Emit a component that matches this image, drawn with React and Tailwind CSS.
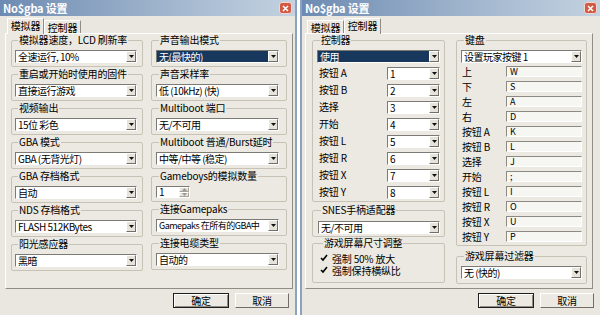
import React from "react";
import clsx from "clsx";

// small down arrow used on combo buttons
const Arrow = () => (
  <span className="flex w-[10px] h-full shrink-0 items-center justify-center bg-[#e6e3da] border border-t-white border-l-white border-r-[#716f68] border-b-[#716f68]">
    <svg width="5" height="3" viewBox="0 0 5 3">
      <path d="M0 0h5L2.5 3z" fill="#111" />
    </svg>
  </span>
);

const Combo = ({ text, selected, className = "", textClass = "text-[10px] tracking-[-0.5px]" }) => (
  <div
    className={clsx(
      "flex h-[13px] border border-t-[#7b7a74] border-l-[#7b7a74] border-r-white border-b-white bg-white",
      className
    )}
  >
    <div
      className={clsx(
        "flex-1 min-w-0 flex items-center px-[2px] leading-[11px] whitespace-nowrap",
        textClass,
        selected && "bg-[#17375c] text-white"
      )}
    >
      {text}
    </div>
    <Arrow />
  </div>
);

const TextBox = ({ text }) => (
  <div className="flex items-center w-[76px] h-[11px] px-[3px] bg-[#f6f6f3] border border-t-[#8c8a83] border-l-[#8c8a83] border-r-white border-b-white text-[9px] leading-[9px]">
    {text}
  </div>
);

const SpinBox = () => (
  <div className="flex h-[12px] w-[34px] border border-t-[#7b7a74] border-l-[#7b7a74] border-r-white border-b-white bg-white">
    <div className="flex-1 flex items-center px-[2px] text-[10px] leading-[10px]">1</div>
    <div className="flex flex-col w-[10px]">
      <span className="flex-1 flex items-center justify-center bg-[#e6e3da] border border-t-white border-l-white border-r-[#a5a39b] border-b-[#a5a39b]">
        <svg width="5" height="3" viewBox="0 0 5 3">
          <path d="M0 3h5L2.5 0z" fill="#9a9890" />
        </svg>
      </span>
      <span className="flex-1 flex items-center justify-center bg-[#e6e3da] border border-t-white border-l-white border-r-[#a5a39b] border-b-[#a5a39b]">
        <svg width="5" height="3" viewBox="0 0 5 3">
          <path d="M0 0h5L2.5 3z" fill="#9a9890" />
        </svg>
      </span>
    </div>
  </div>
);

const Group = ({ label, className = "", children }) => (
  <fieldset className={clsx("min-w-0 border border-[#c6c3b6] rounded-[2px]", className)}>
    <legend className="ml-[3px] px-[1px] text-[10px] leading-[12px]">{label}</legend>
    {children}
  </fieldset>
);

const Check = ({ label }) => (
  <div className="flex items-center h-[12px] gap-[4px] text-[10px] leading-[11px]">
    <span className="flex w-[8px] h-[8px] items-center justify-center">
      <svg width="8" height="8" viewBox="0 0 8 8">
        <path d="M1 4l2 2 4-5" stroke="#000" strokeWidth="1.6" fill="none" />
      </svg>
    </span>
    {label}
  </div>
);

const CloseBtn = () => (
  <div className="flex w-[13px] h-[12px] items-center justify-center rounded-[3px] bg-[#d25a45] border border-[#f2d6cf]">
    <svg width="7" height="7" viewBox="0 0 7 7">
      <path d="M1 1l5 5M6 1L1 6" stroke="#fff" strokeWidth="1.5" />
    </svg>
  </div>
);

const Tabs = ({ active }) => (
  <div className="flex items-end h-[16px] pl-[2px]">
    {["模拟器", "控制器"].map((t) => (
      <div
        key={t}
        className={clsx(
          "flex items-center justify-center w-[37px] text-[10px] leading-[11px] bg-[#ebe9e1] border border-b-0 border-t-white border-l-white border-r-[#8f8d85]",
          t === active ? "h-[16px] relative z-10 -mb-[1px] pb-[2px]" : "h-[13px]"
        )}
      >
        {t}
      </div>
    ))}
  </div>
);

const Buttons = () => (
  <div className="flex justify-end gap-[6px] pt-[4px] pr-[6px]">
    <div className="flex w-[56px] h-[15px] items-center justify-center text-[10px] leading-[11px] bg-[#ebe9e1] border border-[#1e1e1e] shadow-[inset_1px_1px_0_#fff,inset_-1px_-1px_0_#8f8d85]">
      确定
    </div>
    <div className="flex w-[54px] h-[15px] items-center justify-center text-[10px] leading-[11px] bg-[#ebe9e1] border border-t-white border-l-white border-r-[#6f6d66] border-b-[#6f6d66]">
      取消
    </div>
  </div>
);

const TitleBar = () => (
  <div className="flex items-center justify-between h-[16px] pl-[3px] pr-[3px] bg-gradient-to-r from-[#6d8bb2] via-[#9bb1ca] to-[#c4d2e1]">
    <span className="text-white font-bold text-[11px] leading-[12px]">No$gba 设置</span>
    <CloseBtn />
  </div>
);

const leftCol = [
  ["模拟器速度，LCD 刷新率", "全速运行, 10%"],
  ["重启或开始时使用的固件", "直接运行游戏"],
  ["视频输出", "15位 彩色"],
  ["GBA 模式", "GBA (无背光灯)"],
  ["GBA 存档格式", "自动"],
  ["NDS 存档格式", "FLASH 512KBytes"],
  ["阳光感应器", "黑暗"],
];

const rightCol = [
  ["声音输出模式", "无(最快的)", true],
  ["声音采样率", "低 (10kHz) (快)"],
  ["Multiboot 端口", "无/不可用"],
  ["Multiboot 普通/Burst延时", "中等/中等 (稳定)"],
  ["Gameboys的模拟数量", null],
  ["连接Gamepaks", "Gamepaks 在所有的GBA中"],
  ["连接电缆类型", "自动的"],
];

const pads = [
  ["按钮 A", "1"],
  ["按钮 B", "2"],
  ["选择", "3"],
  ["开始", "4"],
  ["按钮 L", "5"],
  ["按钮 R", "6"],
  ["按钮 X", "7"],
  ["按钮 Y", "8"],
];

const keys = [
  ["上", "W"],
  ["下", "S"],
  ["左", "A"],
  ["右", "D"],
  ["按钮 A", "K"],
  ["按钮 B", "L"],
  ["选择", "J"],
  ["开始", ";"],
  ["按钮 L", "I"],
  ["按钮 R", "O"],
  ["按钮 X", "U"],
  ["按钮 Y", "P"],
];

const EmulatorDialog = () => (
  <div className="flex flex-col w-[297px] h-[315px] bg-[#e9e7df] border-r-2 border-[#8ba3c2]">
    <TitleBar />
    <div className="pl-[5px] pt-[1px]">
      <Tabs active="模拟器" />
      <div className="flex gap-[8px] w-[288px] h-[256px] pl-[5px] bg-[#ebe9e1] border border-t-white border-l-white border-r-[#8f8d85] border-b-[#8f8d85]">
        <div className="flex flex-col gap-[1px] w-[132px]">
          {leftCol.map(([label, value]) => (
            <Group key={label} label={label} className="pl-[3px] pr-[5px] pt-[4px] pb-[3px]">
              <Combo text={value} />
            </Group>
          ))}
        </div>
        <div className="flex flex-col gap-[1px] w-[136px]">
          {rightCol.map(([label, value, sel]) => (
            <Group key={label} label={label} className="pl-[4px] pr-[7px] pt-[4px] pb-[3px]">
              {value ? (
                <Combo
                  text={value}
                  selected={sel}
                  textClass={value.startsWith("Gamepaks") ? "text-[9px] tracking-[-0.5px]" : undefined}
                />
              ) : (
                <SpinBox />
              )}
            </Group>
          ))}
        </div>
      </div>
    </div>
    <Buttons />
  </div>
);

const ControllerDialog = () => (
  <div className="flex flex-col w-[300px] h-[315px] bg-[#e9e7df] border-l-2 border-[#8ba3c2]">
    <TitleBar />
    <div className="pl-[3px] pt-[1px]">
      <Tabs active="控制器" />
      <div className="flex gap-[11px] w-[288px] h-[256px] pl-[6px] bg-[#ebe9e1] border border-t-white border-l-white border-r-[#8f8d85] border-b-[#8f8d85]">
        <div className="flex flex-col w-[133px]">
          <Group label="控制器" className="pl-[4px] pr-[4px] pt-[4px] pb-[3px]">
            <Combo text="使用" selected />
            <div className="flex flex-col gap-[5px] pt-[4px]">
              {pads.map(([label, value]) => (
                <div key={label} className="flex items-center justify-between h-[12px] pl-[2px]">
                  <span className="text-[10px] leading-[12px]">{label}</span>
                  <Combo text={value} className="w-[53px] h-[12px]" />
                </div>
              ))}
            </div>
          </Group>
          <Group label="SNES手柄适配器" className="mt-[2px] pl-[5px] pr-[4px] pt-[5px] pb-[2px]">
            <Combo text="无/不可用" />
          </Group>
          <Group label="游戏屏幕尺寸调整" className="pl-[7px] pr-[4px] pt-[3px] pb-[6px]">
            <Check label="强制 50% 放大" />
            <Check label="强制保持横纵比" />
          </Group>
        </div>
        <div className="flex flex-col w-[131px]">
          <Group label="键盘" className="pl-[4px] pr-[4px] pt-[4px] pb-[3px]">
            <Combo text="设置玩家按键  1" />
            <div className="flex flex-col gap-[4px] pt-[3px]">
              {keys.map(([label, value]) => (
                <div key={label} className="flex items-center justify-between h-[11px] pl-[1px]">
                  <span className="text-[10px] leading-[11px]">{label}</span>
                  <TextBox text={value} />
                </div>
              ))}
            </div>
          </Group>
          <Group label="游戏屏幕过滤器" className="mt-[4px] pl-[4px] pr-[4px] pt-[4px] pb-[4px]">
            <Combo text="无 (快的)" />
          </Group>
        </div>
      </div>
    </div>
    <Buttons />
  </div>
);

export default function App() {
  return (
    <div className="flex w-[600px] h-[315px] gap-[3px] bg-white overflow-hidden text-black tracking-[-0.2px] font-['Noto_Sans_CJK_SC',sans-serif]">
      <EmulatorDialog />
      <ControllerDialog />
    </div>
  );
}
